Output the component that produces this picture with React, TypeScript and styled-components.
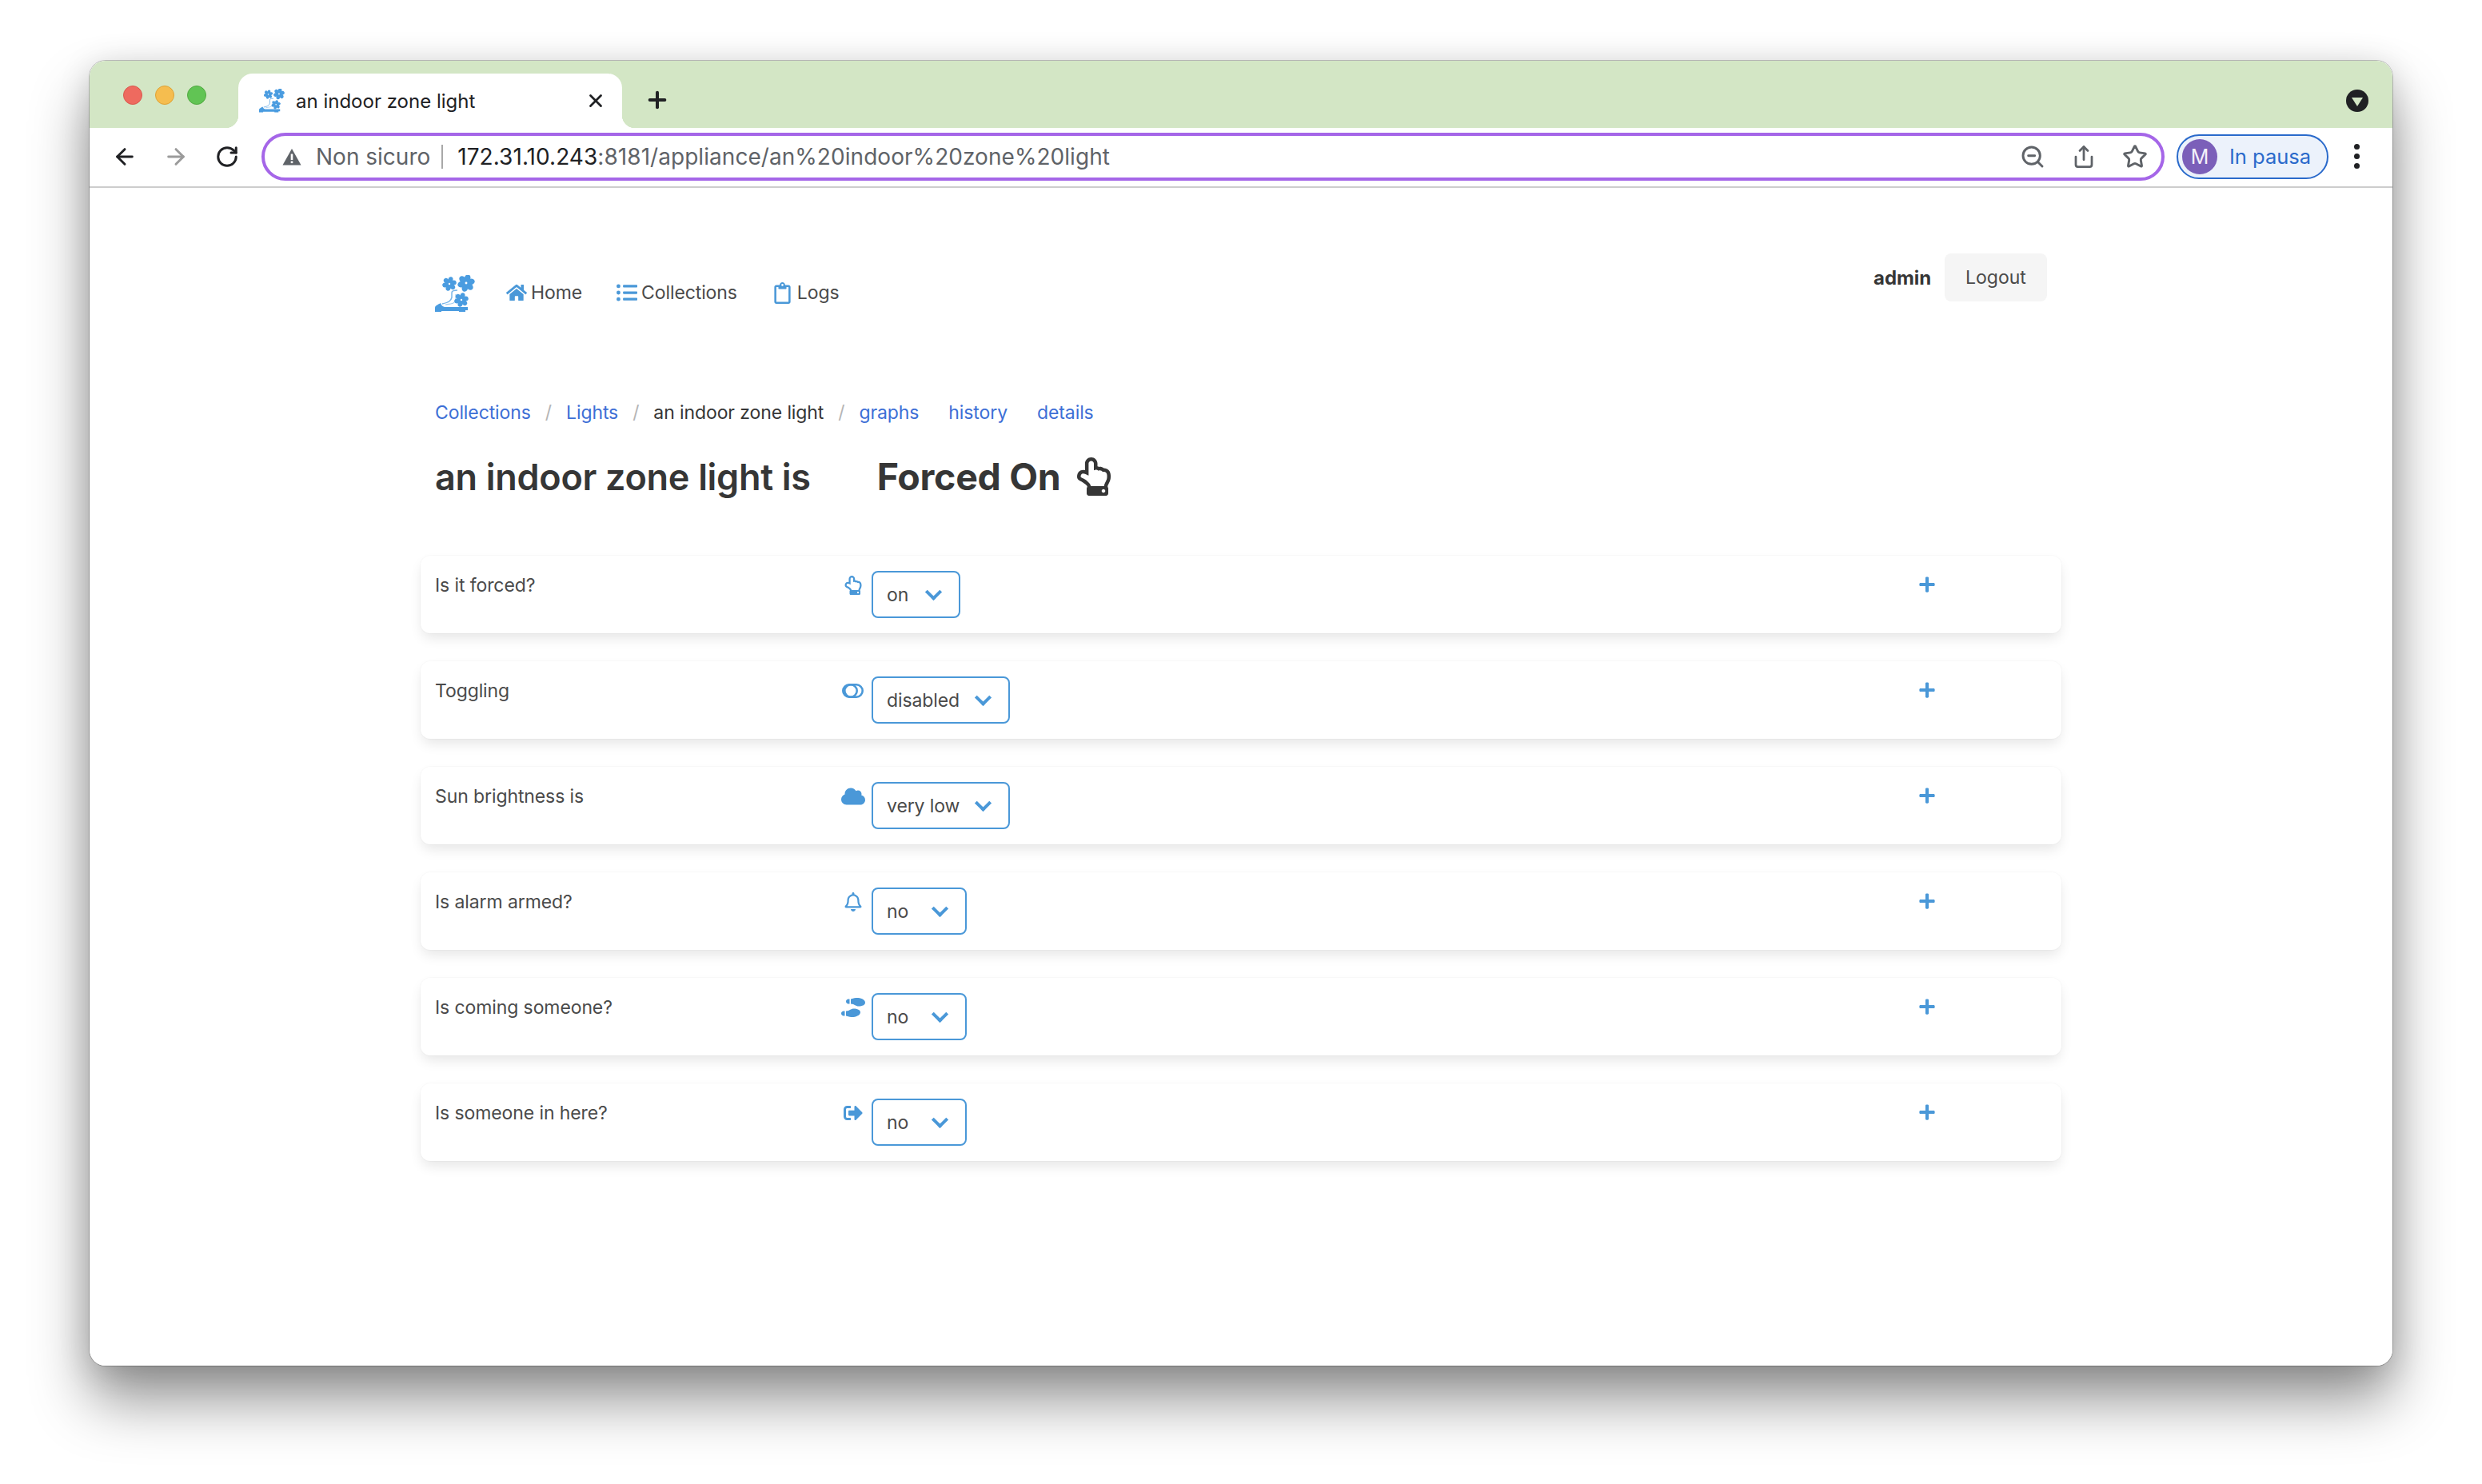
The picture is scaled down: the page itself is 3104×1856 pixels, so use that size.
import React from 'react';
import styled, { createGlobalStyle } from 'styled-components';
import { ArrowLeft, ArrowRight, RotateCw, ZoomOut, Share, Star, X, Plus } from 'lucide-react';
import {
  FaHome,
  FaListUl,
  FaRegClipboard,
  FaRegHandPointUp,
  FaCloud,
  FaRegBell,
  FaShoePrints,
  FaSignOutAlt,
  FaPlus,
} from 'react-icons/fa';

const BLUE = '#4a98d8';

const GlobalStyle = createGlobalStyle`
  html, body {
    margin: 0;
    padding: 0;
    background: #fff;
  }
  body {
    font-family: Inter, "Liberation Sans", sans-serif;
    color: #4a4a4a;
    overflow: hidden;
  }
`;

const Stage = styled.div`
  width: 3104px;
  height: 1856px;
  padding: 76px 112px 148px;
  box-sizing: border-box;
`;

const Window = styled.div`
  height: 1632px;
  background: #fff;
  border-radius: 20px;
  overflow: hidden;
  display: flex;
  flex-direction: column;
`;

const WindowShadow = styled.div`
  border-radius: 20px;
  box-shadow: 0 0 0 1px rgba(0, 0, 0, 0.22), 0 44px 72px rgba(0, 0, 0, 0.42), 0 6px 40px rgba(0, 0, 0, 0.14);
`;

const TabStrip = styled.div`
  height: 84px;
  background: #d3e6c5;
  display: flex;
  align-items: flex-end;
  padding-left: 42px;
  padding-right: 30px;
  flex: none;
`;

const Lights = styled.div`
  display: flex;
  gap: 16px;
  align-self: flex-start;
  margin-top: 31px;
  margin-right: 40px;
`;

const Light = styled.span<{ $color: string; $edge: string }>`
  width: 24px;
  height: 24px;
  box-sizing: border-box;
  border-radius: 50%;
  background: ${p => p.$color};
  border: 1px solid ${p => p.$edge};
`;

const Tab = styled.div`
  position: relative;
  width: 480px;
  height: 68px;
  background: #fff;
  border-radius: 18px 18px 0 0;
  display: flex;
  align-items: center;
  box-sizing: border-box;
  padding: 0 20px 0 26px;
  font-size: 24px;
  color: #202124;
  &::before,
  &::after {
    content: '';
    position: absolute;
    bottom: 0;
    width: 16px;
    height: 16px;
  }
  &::before {
    left: -16px;
    background: radial-gradient(circle at 0 0, #d3e6c5 16px, #fff 16.5px);
  }
  &::after {
    right: -16px;
    background: radial-gradient(circle at 100% 0, #d3e6c5 16px, #fff 16.5px);
  }
`;

const TabTitle = styled.span`
  flex: 1;
  margin-left: 14px;
`;

const NewTab = styled.span`
  display: flex;
  margin-left: 28px;
  align-self: center;
  margin-top: 14px;
  color: #202124;
`;

const Spacer = styled.div`
  flex: 1;
`;

const TabMenu = styled.span`
  align-self: flex-start;
  margin-top: 36px;
  width: 28px;
  height: 28px;
  border-radius: 50%;
  background: #202124;
  display: flex;
  align-items: center;
  justify-content: center;
`;

const TabMenuArrow = styled.span`
  width: 0;
  height: 0;
  border-left: 7px solid transparent;
  border-right: 7px solid transparent;
  border-top: 11px solid #d3e6c5;
  margin-top: 3px;
`;

const Toolbar = styled.div`
  height: 75px;
  flex: none;
  box-sizing: border-box;
  border-bottom: 2px solid #cdcdcd;
  display: flex;
  align-items: center;
  padding-left: 28px;
  padding-right: 30px;
  padding-bottom: 2px;
`;

const NavButton = styled.span<{ $muted?: boolean }>`
  width: 32px;
  height: 32px;
  display: flex;
  align-items: center;
  justify-content: center;
  margin-right: 32px;
  color: ${p => (p.$muted ? '#9b9b9b' : '#202124')};
  &:nth-child(3) {
    margin-right: 27px;
  }
`;

const Omnibox = styled.div`
  width: 2380px;
  height: 60px;
  box-sizing: border-box;
  border: 4px solid #a566e8;
  border-radius: 30px;
  display: flex;
  align-items: center;
  padding-left: 22px;
  padding-right: 17px;
`;

const NotSecure = styled.span`
  font-size: 28px;
  color: #5f6368;
  margin-left: 18px;
`;

const OmniDivider = styled.span`
  width: 2px;
  height: 30px;
  background: #a8a8a8;
  margin: 0 18px 0 14px;
`;

const Url = styled.span`
  font-size: 28px;
  color: #5f6368;
  flex: 1;
  white-space: nowrap;
  letter-spacing: 0.05px;
`;

const UrlHost = styled.span`
  color: #202124;
`;

const OmniIcons = styled.div`
  display: flex;
  align-items: center;
  gap: 33px;
  color: #5f6368;
`;

const Profile = styled.div`
  margin-left: 15px;
  width: 190px;
  height: 56px;
  box-sizing: border-box;
  border: 2px solid #2a6acb;
  border-radius: 28px;
  background: #ecf2fb;
  display: flex;
  align-items: center;
  padding-left: 5px;
  gap: 15px;
  font-size: 25.5px;
  color: #2a6acb;
`;

const Avatar = styled.span`
  width: 44px;
  height: 44px;
  border-radius: 50%;
  background: #7b5fb9;
  color: #f4f0fa;
  display: flex;
  align-items: center;
  justify-content: center;
  font-size: 25px;
`;

const MoreDots = styled.span`
  margin-left: 32px;
  display: flex;
  flex-direction: column;
  gap: 5px;
`;

const Dot = styled.span`
  width: 7px;
  height: 7px;
  border-radius: 50%;
  background: #202124;
`;

const Page = styled.main`
  width: 2052px;
  margin: 0 auto;
  padding-top: 82px;
  font-size: 23px;
  letter-spacing: -0.1px;
`;

const Nav = styled.nav`
  display: flex;
  justify-content: space-between;
  align-items: flex-start;
  height: 104px;
  padding: 0 18px;
`;

const NavLeft = styled.div`
  display: flex;
  align-items: center;
  height: 98px;
`;

const NavItem = styled.a`
  display: flex;
  align-items: center;
  color: #4a4a4a;
  margin-right: 43px;
  gap: 5px;
  svg {
    color: ${BLUE};
  }
`;

const LogoBox = styled.span`
  display: flex;
  margin-right: 39px;
  margin-top: 2px;
`;

const NavRight = styled.div`
  display: flex;
  align-items: center;
  gap: 17px;
`;

const UserName = styled.strong`
  font-size: 24px;
  font-weight: 700;
  color: #363636;
`;

const LogoutButton = styled.button`
  width: 128px;
  height: 60px;
  border: none;
  border-radius: 8px;
  background: #f5f5f5;
  color: #4a4a4a;
  font: inherit;
`;

const Crumbs = styled.div`
  display: flex;
  align-items: center;
  height: 40px;
  margin-top: 75px;
  padding-left: 18px;
`;

const CrumbLink = styled.a`
  color: #3d6fd6;
`;

const CrumbText = styled.span`
  color: #363636;
`;

const CrumbSep = styled.span`
  color: #b5b5b5;
  margin: 0 18px;
`;

const CrumbGap = styled.span`
  width: 37px;
`;

const Title = styled.h1`
  margin: 28px 0 0;
  padding-left: 18px;
  display: flex;
  align-items: center;
  height: 64px;
  font-size: 45px;
  font-weight: 600;
  color: #363636;
  letter-spacing: -0.3px;
  gap: 83px;
`;

const TitleState = styled.span`
  display: flex;
  align-items: center;
  gap: 18px;
  font-size: 46.5px;
  font-weight: 700;
`;

const List = styled.div`
  margin-top: 67px;
  display: flex;
  flex-direction: column;
  gap: 35px;
`;

const Card = styled.section`
  display: grid;
  grid-template-columns: 499px 47px 1fr 24px;
  align-items: start;
  padding: 19px 156px 19px 18px;
  background: #fff;
  box-shadow: 0 8px 16px -2px rgba(10, 10, 10, 0.1), 0 0 0 1px rgba(10, 10, 10, 0.02);
  border-radius: 12px;
`;

const Label = styled.div`
  line-height: 36px;
  color: #4a4a4a;
`;

const IconCell = styled.div`
  height: 36px;
  display: flex;
  align-items: center;
  justify-content: center;
  color: ${BLUE};
`;

const SelectWrap = styled.div`
  position: relative;
  display: inline-flex;
  &::after {
    content: '';
    position: absolute;
    right: 26px;
    top: 19px;
    width: 11px;
    height: 11px;
    border-left: 4px solid ${BLUE};
    border-bottom: 4px solid ${BLUE};
    transform: rotate(-45deg);
    pointer-events: none;
  }
`;

const Select = styled.select`
  appearance: none;
  height: 59px;
  box-sizing: border-box;
  border: 2px solid ${BLUE};
  border-radius: 8px;
  background: #fff;
  color: #4a4a4a;
  font: inherit;
  letter-spacing: inherit;
  padding: 0 60px 0 17px;
  outline: none;
`;

const AddCell = styled.div`
  height: 34px;
  display: flex;
  align-items: center;
  justify-content: center;
  color: ${BLUE};
`;

const Flower = ({ cx, cy, r }: { cx: number; cy: number; r: number }) => (
  <g>
    {[0, 60, 120, 180, 240, 300].map(a => (
      <ellipse
        key={a}
        cx={cx}
        cy={cy - r * 0.58}
        rx={r * 0.34}
        ry={r * 0.42}
        fill="currentColor"
        transform={`rotate(${a + 15} ${cx} ${cy})`}
      />
    ))}
    <circle cx={cx} cy={cy} r={r * 0.3} fill="currentColor" />
    <circle cx={cx} cy={cy} r={r * 0.13} fill="#fff" />
  </g>
);

const Logo = ({ size }: { size: number }) => (
  <svg width={size} height={size * 0.92} viewBox="0 0 50 46" style={{ color: '#4a9ce0' }}>
    <Flower cx={18} cy={11} r={9} />
    <Flower cx={39} cy={10} r={11} />
    <Flower cx={33} cy={31} r={9} />
    <path d="M9 36 C18 34 20 32 21 28 V22 C21 20 23 19 28 19" fill="none" stroke="currentColor" strokeWidth="1.5" opacity="0.75" />
    <path d="M13 37 C20 36 25 36 26 31 V24" fill="none" stroke="currentColor" strokeWidth="1.2" opacity="0.5" />
    <path d="M0 46 V41 C0 38 4 37 7 35 C8 38 10 40 14 40 H41 V44 H38 V46 H30 V45 H8 V46 Z" fill="currentColor" />
  </svg>
);

const ToggleRings = () => (
  <svg width="27" height="18" viewBox="0 0 27 18" fill="none" stroke="currentColor" strokeWidth="2.6">
    <rect x="1.3" y="1.3" width="24.4" height="15.4" rx="7.7" />
    <circle cx="11" cy="9" r="7.7" />
  </svg>
);

const WarningIcon = () => (
  <svg width="24" height="22" viewBox="0 0 24 22">
    <path d="M12 1 L23.5 21.5 H0.5 Z" fill="#5f6368" />
    <rect x="10.7" y="7.5" width="2.6" height="7.5" fill="#fff" />
    <rect x="10.7" y="16.5" width="2.6" height="2.6" fill="#fff" />
  </svg>
);

type Row = {
  label: string;
  icon: React.ReactNode;
  value: string;
  options: string[];
};

const rows: Row[] = [
  { label: 'Is it forced?', icon: <FaRegHandPointUp size={24} />, value: 'on', options: ['on', 'off'] },
  { label: 'Toggling', icon: <ToggleRings />, value: 'disabled', options: ['enabled', 'disabled'] },
  { label: 'Sun brightness is', icon: <FaCloud size={30} />, value: 'very low', options: ['very low', 'low', 'high'] },
  { label: 'Is alarm armed?', icon: <FaRegBell size={24} />, value: 'no', options: ['yes', 'no'] },
  { label: 'Is coming someone?', icon: <FaShoePrints size={30} />, value: 'no', options: ['yes', 'no'] },
  { label: 'Is someone in here?', icon: <FaSignOutAlt size={24} />, value: 'no', options: ['yes', 'no'] },
];

export default function App() {
  return (
    <Stage>
      <GlobalStyle />
      <WindowShadow>
        <Window>
          <TabStrip>
            <Lights>
              <Light $color="#ee6a5f" $edge="#d9584e" />
              <Light $color="#f5bd4f" $edge="#dea236" />
              <Light $color="#61c454" $edge="#52a942" />
            </Lights>
            <Tab>
              <Logo size={32} />
              <TabTitle>an indoor zone light</TabTitle>
              <X size={26} strokeWidth={2.6} />
            </Tab>
            <NewTab>
              <Plus size={32} strokeWidth={3} />
            </NewTab>
            <Spacer />
            <TabMenu>
              <TabMenuArrow />
            </TabMenu>
          </TabStrip>
          <Toolbar>
            <NavButton>
              <ArrowLeft size={32} strokeWidth={2.2} />
            </NavButton>
            <NavButton $muted>
              <ArrowRight size={32} strokeWidth={2.2} />
            </NavButton>
            <NavButton>
              <RotateCw size={30} strokeWidth={2.4} />
            </NavButton>
            <Omnibox>
              <WarningIcon />
              <NotSecure>Non sicuro</NotSecure>
              <OmniDivider />
              <Url>
                <UrlHost>172.31.10.243</UrlHost>:8181/appliance/an%20indoor%20zone%20light
              </Url>
              <OmniIcons>
                <ZoomOut size={32} strokeWidth={2.2} />
                <Share size={30} strokeWidth={2.2} />
                <Star size={32} strokeWidth={2.2} />
              </OmniIcons>
            </Omnibox>
            <Profile>
              <Avatar>M</Avatar>
              In pausa
            </Profile>
            <MoreDots>
              <Dot />
              <Dot />
              <Dot />
            </MoreDots>
          </Toolbar>
          <Page>
            <Nav>
              <NavLeft>
                <LogoBox>
                  <Logo size={50} />
                </LogoBox>
                <NavItem>
                  <FaHome size={26} />
                  Home
                </NavItem>
                <NavItem>
                  <FaListUl size={26} />
                  Collections
                </NavItem>
                <NavItem>
                  <FaRegClipboard size={27} />
                  Logs
                </NavItem>
              </NavLeft>
              <NavRight>
                <UserName>admin</UserName>
                <LogoutButton>Logout</LogoutButton>
              </NavRight>
            </Nav>
            <Crumbs>
              <CrumbLink>Collections</CrumbLink>
              <CrumbSep>/</CrumbSep>
              <CrumbLink>Lights</CrumbLink>
              <CrumbSep>/</CrumbSep>
              <CrumbText>an indoor zone light</CrumbText>
              <CrumbSep>/</CrumbSep>
              <CrumbLink>graphs</CrumbLink>
              <CrumbGap />
              <CrumbLink>history</CrumbLink>
              <CrumbGap />
              <CrumbLink>details</CrumbLink>
            </Crumbs>
            <Title>
              <span>an indoor zone light is</span>
              <TitleState>
                Forced On
                <FaRegHandPointUp size={48} />
              </TitleState>
            </Title>
            <List>
              {rows.map(row => (
                <Card key={row.label}>
                  <Label>{row.label}</Label>
                  <IconCell>{row.icon}</IconCell>
                  <div>
                    <SelectWrap>
                      <Select defaultValue={row.value}>
                        {row.options.map(o => (
                          <option key={o}>{o}</option>
                        ))}
                      </Select>
                    </SelectWrap>
                  </div>
                  <AddCell>
                    <FaPlus size={22} />
                  </AddCell>
                </Card>
              ))}
            </List>
          </Page>
        </Window>
      </WindowShadow>
    </Stage>
  );
}
